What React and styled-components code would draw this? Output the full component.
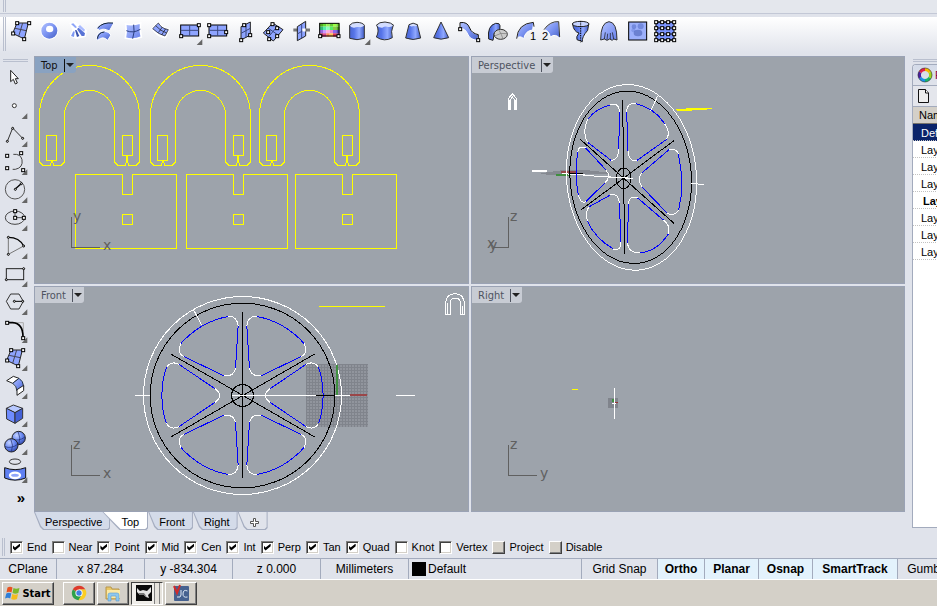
import { useState } from "react";
import styled, { createGlobalStyle, css } from "styled-components";

const GlobalStyle = createGlobalStyle`
  * {
    box-sizing: border-box;
  }
  body {
    margin: 0;
    background: #e0e3eb;
    font-family: "Liberation Sans", Arial, sans-serif;
    font-size: 11px;
    color: #000;
  }
  button {
    margin: 0;
    padding: 0;
    border: 0;
    background: none;
    color: inherit;
    font: inherit;
  }
`;

const Window = styled.div`
  display: flex;
  flex-direction: column;
  height: 100vh;
  overflow: hidden;
`;

const MenuStrip = styled.div`
  display: flex;
  flex: none;
  height: 17px;
  padding-left: 3px;
  background: linear-gradient(#e4e7ed 0 13px, #c3c8d6 13px 14px, #e0e3eb 14px);
`;

const Grip = styled.span`
  flex: none;
  width: 3px;
  height: ${({ $height }) => $height || 34}px;
  border: solid #b9bfce;
  border-width: 0 1px;
`;

const ToolBar = styled.div`
  display: flex;
  flex: none;
  height: 39px;
  padding: 0 0 5px 3px;
  overflow: hidden;
  background: linear-gradient(#ffffff, #e0e3eb 36px);
`;

const Tools = styled.div`
  display: flex;
  padding-left: 1px;
`;

const Tool = styled.button`
  flex: none;
  width: 28px;
  height: 28px;
  svg {
    display: block;
    width: 28px;
    height: 28px;
  }
`;

const Main = styled.div`
  display: flex;
  flex: 1;
  min-height: 0;
`;

const Rail = styled.div`
  display: flex;
  flex: none;
  flex-direction: column;
  width: 34px;
  padding-top: 3px;
  overflow: hidden;
`;

const RailGrip = styled.span`
  flex: none;
  width: 25px;
  height: 3px;
  margin: 0 0 1px 3px;
  border: solid #b9bfce;
  border-width: 1px 0;
`;

const More = styled.button`
  width: 42px;
  height: 28px;
  font: bold 15px "Liberation Sans", Arial, sans-serif;
`;

const Center = styled.div`
  display: flex;
  flex: 1;
  flex-direction: column;
  min-width: 0;
`;

const Viewports = styled.div`
  display: grid;
  flex: 1;
  grid-template-columns: minmax(0, 435fr) minmax(0, 434fr);
  grid-template-rows: minmax(0, 228fr) minmax(0, 226fr);
  gap: 2px;
  min-height: 0;
`;

const ViewportBox = styled.section`
  display: grid;
  grid-template: minmax(0, 1fr) / minmax(0, 1fr);
  overflow: hidden;
  background: #9da3ab;
  box-shadow: inset 1px 1px #9aa2b4, inset -1px -1px #9aa2b4;
`;

const Scene = styled.svg`
  grid-area: 1 / 1;
  width: 100%;
  height: 100%;
  fill: none;
  stroke: #fff;
  shape-rendering: crispEdges;
  path,
  line,
  rect,
  circle,
  ellipse {
    vector-effect: non-scaling-stroke;
  }
  text {
    fill: #606060;
    stroke: none;
    font: 14px "DejaVu Sans", Verdana, sans-serif;
  }
`;

const ViewportTitle = styled.button`
  display: flex;
  z-index: 1;
  grid-area: 1 / 1;
  align-items: center;
  place-self: start;
  height: 16px;
  margin: 1px 0 0 1px;
  padding: 0 2px 0 6px;
  gap: 6px;
  border-radius: 0 0 3px 0;
  background: ${({ $active }) => ($active ? "#89a2c1" : "#c8ccd4")};
  color: ${({ $active }) => ($active ? "#111" : "#4e535f")};
  font: 11px "DejaVu Sans Condensed", "DejaVu Sans", sans-serif;
  font-stretch: condensed;
`;

const Arrow = styled.span`
  display: flex;
  align-items: center;
  height: 13px;
  padding-left: 1px;
  border-left: 1px solid currentColor;
  &::after {
    content: "";
    border: 4px solid transparent;
    border-top-color: #222;
    border-bottom: 0;
  }
`;

const Tabs = styled.div`
  display: flex;
  flex: none;
  height: 24px;
  padding-bottom: 6px;
`;

const Tab = styled.button`
  display: flex;
  z-index: 0;
  position: relative;
  align-items: center;
  height: 18px;
  padding: 2px 8px 0 11px;
  background: #a5adc0;
  clip-path: polygon(0 0, 100% 0, 100% 16px, calc(100% - 2px) 100%, 9px 100%, 6px 15px);
  &::before {
    content: "";
    position: absolute;
    z-index: -1;
    inset: 0 1px 1px 1px;
    background: ${({ $plain }) => ($plain ? "#e0e3eb" : "#d4dbe9")};
    clip-path: polygon(0 0, 100% 0, 100% 15px, calc(100% - 2px) 100%, 9px 100%, 6px 14px);
  }
  ${({ $active }) =>
    $active &&
    css`
      z-index: 1;
      margin-left: -8px;
      padding-right: 9px;
      padding-left: 19px;
      clip-path: polygon(0 0, 100% 0, 100% 16px, calc(100% - 2px) 100%, 17px 100%, 14px 15px);
      &::before {
        background: #fff;
        clip-path: polygon(0 0, 100% 0, 100% 15px, calc(100% - 2px) 100%, 17px 100%, 14px 14px);
      }
    `}
  svg {
    display: block;
    width: 11px;
    height: 11px;
  }
`;

const SidePanel = styled.aside`
  display: flex;
  flex: none;
  flex-direction: column;
  width: 25px;
  margin-left: 7px;
  padding: 3px 0 8px;
  overflow: hidden;
  white-space: nowrap;
`;

const PanelGrip = styled(RailGrip)`
  margin: 0 0 2px 1px;
`;

const Panel = styled.div`
  display: flex;
  flex: 1;
  flex-direction: column;
  border: solid #a3abbd;
  border-width: 1px 0 1px 1px;
  border-radius: 4px 0 0 0;
  overflow: hidden;
  background: #fff;
`;

const PanelTab = styled.button`
  display: flex;
  flex: none;
  align-items: center;
  gap: 2px;
  height: 21px;
  padding-left: 4px;
  border-bottom: 1px solid #a3abbd;
  background: linear-gradient(#d4dbe9, #e0e3eb);
  color: #803;
  svg {
    flex: none;
    width: 16px;
    height: 16px;
  }
`;

const PanelTools = styled(PanelTab)`
  background: #e4e6ec;
`;

const LayerTable = styled.table`
  width: 100%;
  border-spacing: 0;
  th {
    height: 17px;
    padding: 0 0 0 6px;
    border-bottom: 1px solid #77736a;
    background: #d4d0c8;
    font-weight: normal;
    text-align: left;
  }
`;

const LayerCell = styled.td`
  height: 17px;
  padding: 1px 0 0 ${({ $current }) => ($current ? 10 : 8)}px;
  border-bottom: 1px dotted #c2c2c2;
  background: ${({ $selected }) => ($selected ? "#0a246a" : "#fff")};
  color: ${({ $selected }) => ($selected ? "#fff" : "#000")};
  font-weight: ${({ $current }) => ($current ? "bold" : "normal")};
`;

const SnapBar = styled.div`
  display: flex;
  flex: none;
  align-items: center;
  gap: 5px;
  height: 22px;
  padding-left: 2px;
  overflow: hidden;
  white-space: nowrap;
`;

const SnapLabel = styled.label`
  display: flex;
  align-items: center;
  gap: 4px;
`;

const CheckBox = styled.input`
  display: grid;
  place-items: center;
  width: 13px;
  height: 13px;
  margin: 0;
  appearance: none;
  border: 1px solid;
  border-color: #808080 #fff #fff #808080;
  background: #fff;
  box-shadow: inset 1px 1px #404040, inset -1px -1px #d4d0c8;
  &:checked::after {
    content: "";
    width: 7px;
    height: 7px;
    background: #000;
    clip-path: polygon(0 28%, 28% 57%, 100% 0, 100% 40%, 28% 100%, 0 70%);
  }
  ${({ $raised }) =>
    $raised &&
    css`
      border-color: #fff #404040 #404040 #fff;
      background: #d4d0c8;
      box-shadow: inset -1px -1px #808080;
    `}
`;

const StatusBar = styled.div`
  display: flex;
  flex: none;
  height: 21px;
  overflow: hidden;
  border-top: 1px solid #a3abbd;
  font-size: 12px;
`;

const StatusCell = styled.button`
  display: flex;
  flex: none;
  align-items: center;
  justify-content: ${({ $left }) => ($left ? "flex-start" : "center")};
  gap: 2px;
  width: ${({ $width }) => $width}px;
  padding: 0 3px;
  overflow: hidden;
  border-right: 1px solid #a3abbd;
  background: ${({ $on }) => ($on ? "#e3f2fc" : "transparent")};
  font-weight: ${({ $on }) => ($on ? "bold" : "normal")};
  white-space: nowrap;
`;

const Swatch = styled.span`
  width: 14px;
  height: 14px;
  background: #000;
`;

const TaskBar = styled.div`
  display: flex;
  flex: none;
  align-items: center;
  gap: 2px;
  height: 27px;
  padding: 0 2px;
  border-top: 1px solid #fff;
  background: #d4d0c8;
`;

const TaskButton = styled.button`
  display: flex;
  align-items: center;
  justify-content: center;
  width: 32px;
  height: 23px;
  border: 1px solid;
  border-color: #fff #404040 #404040 #fff;
  box-shadow: inset -1px -1px #808080;
  svg {
    display: block;
    width: 18px;
    height: 18px;
  }
  ${({ $pressed }) =>
    $pressed &&
    css`
      justify-content: flex-start;
      padding-left: 3px;
      border-color: #404040 #fff #fff #404040;
      background: linear-gradient(
        90deg,
        #f0eeea 22px,
        #808080 22px 23px,
        #e6e3dd 23px 27px,
        #808080 27px 28px,
        #e6e3dd 28px
      );
      box-shadow: none;
    `}
`;

const StartButton = styled(TaskButton)`
  width: 52px;
  margin-right: 7px;
  gap: 1px;
  font: bold 11px "DejaVu Sans Condensed", "DejaVu Sans", sans-serif;
  svg {
    width: 16px;
    height: 16px;
  }
`;

/* ---- icon parts, drawn on an 84 x 84 board ---- */

const Node = ({ x, y }) => (
  <rect x={x - 4} y={y - 4} width="9" height="9" fill="#fff" stroke="#000" strokeWidth="3" />
);

const Dot = ({ x, y, r = 4 }) => (
  <circle cx={x} cy={y} r={r} fill="#fff" stroke="#000" strokeWidth="3" />
);

const Flyout = () => <path d="M82 67V84H65Z" fill="#666" />;

const SurfaceIcon = () => (
  <>
    <path d="M33 21H67L55 69L20 52Z" fill="#8ea4ff" stroke="#222" strokeWidth="3" />
    <path d="M50 21L38 61M27 37L61 44" stroke="#445" strokeWidth="3" fill="none" />
    <Node x={33} y={21} />
    <Node x={69} y={21} />
    <Node x={21} y={52} />
    <Node x={54} y={69} />
  </>
);

const railIcons = {
  Select: (
    <path
      d="M32 22V56L40 49L46 63L52 60L46 47H55Z"
      fill="#fff"
      stroke="#222"
      strokeWidth="3"
    />
  ),
  Point: <circle cx="43" cy="44" r="6" fill="#fff" stroke="#333" strokeWidth="3" />,
  Polyline: (
    <>
      <path d="M22 67L38 27L68 58" fill="none" stroke="#333" strokeWidth="3" />
      <Dot x={22} y={67} r={3} />
      <Dot x={38} y={28} r={3} />
      <Dot x={68} y={58} r={3} />
    </>
  ),
  Curve: (
    <>
      <path d="M40 22Q62 20 66 38Q70 62 46 67H38" fill="none" stroke="#444" strokeWidth="3" />
      <Node x={21} y={26} />
      <Node x={63} y={18} />
      <Node x={21} y={63} />
      <Node x={69} y={69} />
    </>
  ),
  Circle: (
    <>
      <circle cx="45" cy="43" r="29" fill="none" stroke="#555" strokeWidth="3" />
      <path d="M45 43L65 25" stroke="#000" strokeWidth="4" />
      <Dot x={46} y={43} r={3} />
      <Dot x={64} y={26} r={3} />
    </>
  ),
  Ellipse: (
    <>
      <ellipse cx="45" cy="44" rx="29" ry="20" fill="none" stroke="#444" strokeWidth="3" />
      <path d="M45 24V44H71" fill="none" stroke="#000" strokeWidth="2" />
      <Node x={45} y={24} />
      <Node x={45} y={44} />
      <Node x={71} y={44} />
    </>
  ),
  Arc: (
    <>
      <path d="M25 19V70L71 45" fill="none" stroke="#777" strokeWidth="3" />
      <path d="M25 19Q58 19 71 45" fill="none" stroke="#000" strokeWidth="4" />
      <Dot x={25} y={19} r={3} />
      <Dot x={71} y={45} r={3} />
      <Dot x={25} y={70} r={3} />
    </>
  ),
  Rectangle: (
    <>
      <rect x="19" y="29" width="52" height="33" fill="none" stroke="#222" strokeWidth="3" />
      <Dot x={71} y={29} r={3} />
      <Dot x={19} y={62} r={3} />
    </>
  ),
  Polygon: (
    <>
      <path d="M19 43L32 21H57L70 43L57 66H32Z" fill="none" stroke="#333" strokeWidth="3" />
      <path d="M44 43H68" stroke="#000" strokeWidth="3" />
      <Dot x={43} y={43} r={3} />
      <Dot x={68} y={43} r={3} />
    </>
  ),
  Fillet: (
    <>
      <path d="M40 23H70V48" fill="none" stroke="#aaa" strokeWidth="3" />
      <path d="M21 23H38Q69 25 69 66" fill="none" stroke="#000" strokeWidth="5" />
      <Node x={21} y={23} />
      <Node x={69} y={69} />
    </>
  ),
  Surface: <SurfaceIcon />,
  BlendSurface: (
    <>
      <path d="M20 29L40 16L57 22L38 37Z" fill="#fff" stroke="#222" strokeWidth="3" />
      <path d="M38 37L57 22Q70 30 71 47L51 60Q50 44 38 37Z" fill="url(#blue)" stroke="#234" strokeWidth="3" />
      <path d="M51 56L71 43V59L51 73Z" fill="#fff" stroke="#222" strokeWidth="3" />
    </>
  ),
  Box: (
    <>
      <path d="M19 28L40 18L68 28L45 41Z" fill="#b7c8ff" stroke="#333" strokeWidth="3" />
      <path d="M19 28L45 41V73L20 60Z" fill="#6f8cff" stroke="#333" strokeWidth="3" />
      <path d="M45 41L68 28V58L45 73Z" fill="#4461d6" stroke="#333" strokeWidth="3" />
    </>
  ),
  Boolean: (
    <>
      <circle cx="56" cy="33" r="20" fill="url(#ball)" stroke="#222" strokeWidth="3" />
      <path d="M54 13Q64 33 56 53M37 37Q56 44 75 30" fill="none" stroke="#1d2a66" strokeWidth="2" />
      <circle cx="34" cy="55" r="20" fill="url(#ball)" stroke="#222" strokeWidth="3" />
      <path d="M32 35Q42 55 34 75M15 59Q34 66 53 52" fill="none" stroke="#1d2a66" strokeWidth="2" />
    </>
  ),
  Project: (
    <>
      <ellipse cx="45" cy="20" rx="17" ry="8" fill="none" stroke="#333" strokeWidth="3" />
      <path d="M14 38Q45 50 77 38V69Q45 82 14 69Z" fill="#5f80f2" stroke="#111" strokeWidth="3" />
      <ellipse cx="45" cy="61" rx="15" ry="8" fill="#8ea5fa" stroke="#fff" strokeWidth="7" />
    </>
  ),
};

const stripColors = [
  "#5a2", "#6d3", "#9e5", "#6c3", "#9f4", "#7d3",
  "#3b7", "#5ea", "#8fb", "#5e6", "#8c4", "#5a2",
  "#96d", "#c9f", "#fad", "#e8c", "#86e", "#54b",
  "#a35", "#d48", "#f85", "#fb5", "#d35", "#926",
];

const topIcons = {
  "Surface from corners": (
    <g transform="translate(-3 -3)">
      <SurfaceIcon />
    </g>
  ),
  "Planar curves": (
    <>
      <circle cx="43" cy="41" r="27" fill="#fff" />
      <circle cx="43" cy="41" r="24" fill="url(#blue)" />
      <ellipse cx="44" cy="36" rx="11" ry="10" fill="#fff" />
    </>
  ),
  "Curve network": (
    <>
      <path d="M19 18L36 14L72 40L68 60L40 66L20 58L28 38Z" fill="#fff" />
      <path d="M24 21L31 19L42 31L37 33Z" fill="#8da5f8" />
      <path d="M42 36L47 32L66 49L64 57L56 57Z" fill="#5873d6" />
      <path d="M45 29L51 24L66 38L63 44Z" fill="#a9baff" />
      <path d="M36 39L41 40L49 57L42 60Z" fill="#3b53ad" />
      <path d="M31 43L35 44L33 60L24 57Z" fill="#7e98f2" />
    </>
  ),
  Loft: (
    <>
      <path d="M16 34Q33 10 69 17L55 42Q37 32 26 40Z" fill="url(#blue)" stroke="#fff" strokeWidth="3" />
      <path d="M16 66Q17 42 40 42Q53 44 60 54L50 70Q36 55 20 70Z" fill="url(#blue)" stroke="#fff" strokeWidth="3" />
      <path d="M20 33Q35 15 66 18M19 65Q22 46 40 45" fill="none" stroke="#123" strokeWidth="3" />
    </>
  ),
  "Surface from edges": (
    <>
      <path d="M20 21Q40 26 65 18Q62 42 67 60Q43 70 19 63Q24 42 20 21Z" fill="url(#soft)" stroke="#fff" strokeWidth="5" />
      <path d="M44 23Q48 45 41 65M22 41Q42 50 64 37" fill="none" stroke="#2b3e80" strokeWidth="3" />
    </>
  ),
  Patch: (
    <>
      <path d="M17 35L34 18Q44 35 64 38L54 60Q34 58 17 35Z" fill="#8ea4ff" stroke="#fff" strokeWidth="8" />
      <path d="M17 35L34 18Q44 35 64 38L54 57Q34 52 17 35Z" fill="#8ea4ff" stroke="#111" strokeWidth="2" />
      <path d="M26 26Q40 42 59 48M34 47L46 30M44 54L56 35" fill="none" stroke="#111" strokeWidth="2" />
    </>
  ),
  "Rectangular plane": (
    <>
      <rect x="17" y="24" width="54" height="33" fill="#8ea4ff" stroke="#000" strokeWidth="3" />
      <path d="M44 24V57M17 40H71" stroke="#3a4880" strokeWidth="3" />
      <Node x={71} y={24} />
      <Node x={18} y={57} />
      <Flyout />
    </>
  ),
  "Plane 3 points": (
    <>
      <rect x="18" y="24" width="53" height="33" fill="#8ea4ff" stroke="#000" strokeWidth="3" />
      <path d="M44 24V57M18 40H71" stroke="#3a4880" strokeWidth="3" />
      <Node x={18} y={24} />
      <Node x={18} y={57} />
      <Node x={69} y={45} />
    </>
  ),
  "Vertical plane": (
    <>
      <path d="M30 29L58 15V54L30 69Z" fill="#8ea4ff" stroke="#222" strokeWidth="3" />
      <path d="M45 21V62M30 49L58 34" stroke="#3a4880" strokeWidth="3" />
      <Node x={39} y={24} />
      <Node x={57} y={54} />
      <Node x={30} y={69} />
    </>
  ),
  "Plane through points": (
    <>
      <path d="M13 48L41 18L72 38L43 72Z" fill="#8ea4ff" stroke="#222" strokeWidth="3" />
      <path d="M27 33L57 54M56 27L28 60" stroke="#3a4880" strokeWidth="3" />
      <Node x={40} y={21} />
      <Node x={27} y={45} />
      <Node x={54} y={33} />
      <Node x={30} y={66} />
      <Node x={54} y={57} />
    </>
  ),
  "Cutting plane": (
    <>
      <path d="M19 39H69" stroke="#777" strokeWidth="9" />
      <path d="M31 29L56 13V57L31 71Z" fill="#8ea4ff" stroke="#222" strokeWidth="3" />
      <path d="M44 21V64M31 51L56 36" stroke="#3a4880" strokeWidth="3" />
      <path d="M46 39H56" stroke="#fff" strokeWidth="9" />
    </>
  ),
  Picture: (
    <>
      {stripColors.map((color, i) => (
        <rect key={i} x={14 + (i % 6) * 10} y={19 + Math.floor(i / 6) * 10} width="10" height="10" fill={color} />
      ))}
      <rect x="14" y="19" width="58" height="38" fill="none" stroke="#000" strokeWidth="3" />
      <Node x={15} y={57} />
      <Node x={70} y={57} />
    </>
  ),
  Extrude: (
    <>
      <path d="M20 25V64Q42 72 64 64V25Z" fill="url(#metal)" stroke="#333" strokeWidth="3" />
      <path d="M20 25Q26 16 42 16Q60 17 64 25Q60 32 48 30Q40 29 34 32Q24 33 20 25Z" fill="#d3ddff" />
      <path d="M20 25Q26 16 42 16Q60 17 64 25" fill="none" stroke="#333" strokeWidth="3" />
      <Flyout />
    </>
  ),
  "Extrude along curve": (
    <>
      <path d="M17 24Q26 42 16 60Q40 76 64 62Q58 44 67 24Z" fill="url(#metal)" stroke="#333" strokeWidth="3" />
      <path d="M17 24Q24 15 42 15Q62 17 67 24Q62 32 48 29Q40 28 34 32Q22 33 17 24Z" fill="#d3ddff" />
      <path d="M17 24Q24 15 42 15Q62 17 67 24" fill="none" stroke="#333" strokeWidth="3" />
    </>
  ),
  "Extrude tapered": (
    <>
      <path d="M30 23L20 63Q42 72 65 63L55 23Z" fill="url(#metal)" stroke="#333" strokeWidth="3" />
      <path d="M30 23Q42 14 55 23Q52 29 44 27Q34 31 30 23Z" fill="#d3ddff" />
      <path d="M30 23Q42 14 55 23" fill="none" stroke="#333" strokeWidth="3" />
    </>
  ),
  "Extrude to point": (
    <path d="M42 15L20 62Q42 71 65 62Z" fill="url(#metal)" stroke="#333" strokeWidth="3" />
  ),
  Ribbon: (
    <>
      <path d="M15 16Q38 12 45 34Q51 50 71 53L68 70Q44 68 38 51Q31 34 15 34Z" fill="url(#blue)" stroke="#fff" strokeWidth="3" />
      <path d="M15 36V17Q37 13 44 33Q50 49 70 53V67" fill="none" stroke="#111" strokeWidth="3" />
      <Node x={15} y={36} />
      <Node x={69} y={69} />
    </>
  ),
  "Sweep blend": (
    <>
      <path d="M17 66Q12 26 38 19Q50 17 51 26L50 46L34 48L30 70Z" fill="url(#metal)" stroke="#222" strokeWidth="3" />
      <ellipse cx="53" cy="52" rx="20" ry="15" fill="#ccc" stroke="#333" strokeWidth="3" />
      <path d="M35 57Q54 45 71 50M47 38Q56 52 60 66" fill="none" stroke="#777" strokeWidth="2" />
    </>
  ),
  "Sweep 1 rail": (
    <>
      <path d="M17 65Q20 20 68 15L65 39Q44 40 38 65Q26 54 17 65Z" fill="url(#blue)" stroke="#fff" strokeWidth="3" />
      <path d="M17 65Q20 20 67 16L69 29" fill="none" stroke="#222" strokeWidth="3" />
      <text x="57" y="70" fontSize="33">1</text>
    </>
  ),
  "Sweep 2 rails": (
    <>
      <path d="M15 38Q33 12 59 14L63 65Q50 48 34 60Q30 40 15 38Z" fill="url(#blue)" stroke="#fff" strokeWidth="3" />
      <path d="M15 38Q33 12 59 14L62 60" fill="none" stroke="#333" strokeWidth="3" />
      <text x="9" y="70" fontSize="33">2</text>
    </>
  ),
  Revolve: (
    <>
      <path d="M17 22Q20 44 36 48Q26 60 30 68L46 74Q44 60 62 40L65 22Z" fill="url(#metal)" stroke="#222" strokeWidth="3" />
      <ellipse cx="41" cy="21" rx="25" ry="8" fill="#c6d3ff" stroke="#222" strokeWidth="3" />
      <path d="M41 12V76" stroke="#000" strokeWidth="3" strokeDasharray="4 3" />
    </>
  ),
  Drape: (
    <>
      <path d="M17 69Q17 16 42 14Q66 15 66 69L56 66L52 70L44 66L36 70L28 66Z" fill="url(#soft)" stroke="#333" strokeWidth="3" />
      <path d="M28 66L31 46M36 68L38 50M46 66V48M56 66L52 46" stroke="#111" strokeWidth="2" />
    </>
  ),
  Heightfield: (
    <>
      <rect x="17" y="15" width="54" height="54" fill="#9cb0fb" stroke="#000" strokeWidth="3" />
      <circle cx="33" cy="29" r="7" fill="#4a64c2" opacity=".5" />
      <circle cx="53" cy="28" r="9" fill="#4a64c2" opacity=".5" />
      <ellipse cx="45" cy="48" rx="13" ry="10" fill="#3a51a8" opacity=".5" />
      <circle cx="31" cy="40" r="6" fill="#4a64c2" opacity=".3" />
    </>
  ),
  "Point grid": (
    <>
      <rect x="15" y="15" width="54" height="54" fill="#7c95ff" stroke="#000" strokeWidth="3" />
      {[15, 33, 51, 69].map((y) => (
        <g key={y}>
          <path d={`M15 ${y}H69`} stroke="#000" strokeWidth="3" />
          {[15, 33, 51, 69].map((x) => (
            <Node key={x} x={x} y={y} />
          ))}
        </g>
      ))}
    </>
  ),
};

const Gradients = () => (
  <svg width="0" height="0" style={{ position: "absolute" }} aria-hidden="true">
    <defs>
      <linearGradient id="blue" x1="0" y1="0" x2="1" y2="1">
        <stop offset="0" stopColor="#b4c4ff" />
        <stop offset=".5" stopColor="#7b93f2" />
        <stop offset="1" stopColor="#4560c4" />
      </linearGradient>
      <linearGradient id="soft" x1="0" y1="0" x2="1" y2="1">
        <stop offset="0" stopColor="#b4c4ff" />
        <stop offset="1" stopColor="#6780ec" />
      </linearGradient>
      <linearGradient id="metal">
        <stop offset="0" stopColor="#4a66d0" />
        <stop offset=".3" stopColor="#5674e8" />
        <stop offset=".65" stopColor="#8fa8ff" />
        <stop offset="1" stopColor="#3f5ac4" />
      </linearGradient>
      <radialGradient id="ball" cx=".35" cy=".3" r=".8">
        <stop offset="0" stopColor="#c4d2ff" />
        <stop offset=".5" stopColor="#6a89f2" />
        <stop offset="1" stopColor="#2a40a0" />
      </radialGradient>
      <pattern id="mesh" width="3" height="3" patternUnits="userSpaceOnUse" x="306" y="364">
        <rect width="3" height="3" fill="#91959d" />
        <path d="M0 .5H3M.5 0V3" stroke="#80848c" />
      </pattern>
    </defs>
  </svg>
);

/* ---- scenes ---- */

const Magnet = ({ dx }) => (
  <g transform={`translate(${dx} 0)`}>
    <path d="M39.5 115.5A50 50 0 0 1 139.5 115.5V162L136 165.5H129L127.5 162V155.5M126.5 155.5V162L125 165.5H118L114.5 162V115.5A25 25 0 0 0 64.5 115.5V162L61 165.5H54L52.5 162V160.5M51.5 160.5V162L50 165.5H43L39.5 162" />
    <path d="M39.5 162V115" />
    <rect x="46.5" y="135.5" width="10" height="25" />
    <rect x="122.5" y="135.5" width="10" height="20" />
    <path d="M75.5 174.5H122.5V194.5H132.5V174.5H176.5V248.5H75.5Z" />
    <rect x="122.5" y="214.5" width="10" height="10" />
  </g>
);

const Axes = ({ x, y, up, side }) => (
  <g>
    <path d={`M${x + 0.5} ${y - 30}V${y + 0.5}H${x + 29}`} stroke="#606060" />
    <text x={x + 2} y={y - 26}>{up}</text>
    <text x={x + 32} y={y + 3}>{side}</text>
  </g>
);

const TopScene = () => (
  <Scene viewBox="34 56 435 228">
    <g stroke="#ff0">
      <Magnet dx={0} />
      <Magnet dx={111} />
      <Magnet dx={220} />
    </g>
    <Axes x={71} y={247} up="y" side="x" />
  </Scene>
);

const PerspectiveScene = () => (
  <Scene viewBox="471 56 434 228">
    <g transform="translate(470 50) scale(.33333)">
      <path d="M210 370L280 360H347L427 369L410 373L230 374Z" fill="#858991" stroke="none" />
      <path d="M272 366H318" stroke="#94474a" strokeWidth="2" />
      <path d="M258 375H302" stroke="#3f8f3f" strokeWidth="2" />
      <path d="M186 363H231" strokeWidth="2" />
      <path d="M276 371L345 375" />
      <ellipse cx="484.5" cy="382" rx="195" ry="279" transform="rotate(-4.5 484.5 382)" />
      <ellipse cx="482" cy="382" rx="182" ry="259" transform="rotate(-4.5 482 382)" stroke="#000" />
      <path d="M338 376L490 385M664 401L701 403M563 138L541 184" />
      <path d="M300 372H338" stroke="#000" />
      <g stroke="#00f">
        <path d="M353 208Q380 174 420 165M449 187L446 296M423 331L353 277" />
        <path d="M497 161Q555 175 584 222M590 268L500 332M474 303L470 185" />
        <path d="M347 294L408 360M404 400L347 455M325 435Q313 370 323 306" />
        <path d="M625 312Q645 400 626 480M592 490L515 410M514 370L597 299" />
        <path d="M358 470L421 435M448 458L453 575M430 597Q375 565 352 513" />
        <path d="M503 444L580 510M595 552Q560 605 510 608M473 578L475 462" />
      </g>
      <path d="M420 165Q447 155 449 187M446 296Q445 332 423 331M353 277Q335 248 353 208" />
      <path d="M470 185Q470 158 497 161M584 222Q602 245 590 268M500 332Q476 335 474 303" />
      <path d="M323 306Q325 285 347 294M408 360Q425 380 404 400M347 455Q332 462 325 435" />
      <path d="M597 299Q617 292 625 312M626 480Q615 500 592 490M515 410Q502 385 514 370" />
      <path d="M421 435Q445 428 448 458M453 575Q452 605 430 597M352 513Q344 485 358 470" />
      <path d="M475 462Q478 435 503 444M580 510Q602 525 595 552M510 608Q474 610 473 578" />
      <g stroke="#000">
        <ellipse cx="461" cy="385" rx="22" ry="31" />
        <path d="M458 150L464 611M331 268L613 521M613 271L334 479" />
      </g>
      <path d="M415 382L490 385" />
      <path d="M615 177H640L660 173H725V178L668 180L665 184H625Z" fill="#ff0" stroke="none" />
      <path d="M116 179V145L127 131L139 145V179M122 179V148L127 141L133 148V179" />
      <path d="M119 150V179M136 150V179" />
    </g>
    <path d="M508.5 217V247.5H494" stroke="#606060" />
    <text x="510" y="221">z</text>
    <text x="487" y="248">x</text>
    <text x="489" y="250">y</text>
  </Scene>
);

// quarter of the wheel, mirrored into the other three
const Quarter = ({ transform }) => (
  <g transform={transform}>
    <path stroke="#00f" d="M-185 -156Q-125 -222 -43 -237M-13 -209L-21 -81M-56 -59L-176 -117" />
    <path d="M-43 -237Q-16 -239 -13 -209M-21 -81Q-26 -56 -56 -59M-176 -117Q-198 -126 -185 -156" />
    <path stroke="#00f" d="M-242 0Q-241 -50 -228 -84M-190 -93L-82 -20" />
    <path d="M-228 -84Q-214 -106 -190 -93M-82 -20Q-68 -10 -68 0" />
  </g>
);

const FrontScene = () => (
  <Scene viewBox="34 286 435 226">
    <rect x="306" y="364" width="62" height="63" fill="url(#mesh)" stroke="none" />
    <g transform="translate(242.5 395.5) scale(.33333)">
      <circle r="297" />
      <circle r="277" stroke="#000" />
      <Quarter />
      <Quarter transform="scale(-1 1)" />
      <Quarter transform="scale(1 -1)" />
      <Quarter transform="scale(-1 -1)" />
      <g stroke="#000">
        <circle r="33" />
        <path d="M0 -250V247M-214 -124L216 124M216 -124L-214 124M220 0H279" />
      </g>
      <path d="M-322 0H-277M-33 0H220M279 0H322M-147 -257L-122 -211" />
    </g>
    <path d="M337 365V395" stroke="#3f9040" strokeWidth="2" />
    <path d="M350 395H367" stroke="#9a4648" strokeWidth="2" />
    <path d="M319 306.5H385" stroke="#ff0" />
    <path d="M396 395.5H415" />
    <path d="M445.5 314V304Q446 294 455 293.500Q464 294 464.5 304V314H460.5V303Q460 298 455 298Q450 298 450.5 303V314Z" />
    <path d="M447.5 303V314M462.5 306V314" />
    <Axes x={71} y={475} up="z" side="x" />
  </Scene>
);

const RightScene = () => (
  <Scene viewBox="471 286 434 226">
    <rect x="608" y="398" width="10" height="10" fill="#80848c" stroke="none" />
    <path d="M613 399V402" stroke="#3f9040" strokeWidth="2" />
    <path d="M614 402.5H618" stroke="#9a3638" />
    <path d="M612 403.5H616" />
    <path d="M614.5 388V419" />
    <path d="M572 389.5H578" stroke="#ff0" />
    <Axes x={508} y={475} up="z" side="y" />
  </Scene>
);

const views = [
  { name: "Top", scene: TopScene },
  { name: "Perspective", scene: PerspectiveScene },
  { name: "Front", scene: FrontScene },
  { name: "Right", scene: RightScene },
];

const tabs = ["Perspective", "Top", "Front", "Right"];

const layers = ["Default", "Layer 01", "Layer 02", "Layer 03", "Layer 04", "Layer 05", "Layer 06", "Layer 07"];

const snaps = [
  ["End", true],
  ["Near", false],
  ["Point", true],
  ["Mid", true],
  ["Cen", true],
  ["Int", true],
  ["Perp", true],
  ["Tan", true],
  ["Quad", true],
  ["Knot", false],
  ["Vertex", false],
];

const status = [
  { label: "CPlane", width: 57 },
  { label: "x 87.284", width: 88 },
  { label: "y -834.304", width: 88 },
  { label: "z 0.000", width: 88 },
  { label: "Millimeters", width: 88 },
  { label: "Default", width: 173, layer: true },
  { label: "Grid Snap", width: 76 },
  { label: "Ortho", width: 47, on: true },
  { label: "Planar", width: 54, on: true },
  { label: "Osnap", width: 54, on: true },
  { label: "SmartTrack", width: 85, on: true },
  { label: "Gumball", width: 64 },
];

function Viewport({ name, scene: Drawing, active, onSelect }) {
  return (
    <ViewportBox aria-label={name}>
      <Drawing />
      <ViewportTitle $active={active} onClick={() => onSelect(name)}>
        {name}
        <Arrow />
      </ViewportTitle>
    </ViewportBox>
  );
}

function App() {
  const [activeView, setActiveView] = useState("Top");

  return (
    <>
      <GlobalStyle />
      <Gradients />
      <Window>
        <MenuStrip>
          <Grip $height={12} />
        </MenuStrip>
        <ToolBar>
          <Grip />
          <Tools>
            {Object.entries(topIcons).map(([name, icon]) => (
              <Tool key={name} aria-label={name}>
                <svg viewBox="0 0 84 84">{icon}</svg>
              </Tool>
            ))}
          </Tools>
        </ToolBar>
        <Main>
          <Rail>
            <RailGrip />
            {Object.entries(railIcons).map(([name, icon]) => (
              <Tool key={name} aria-label={name}>
                <svg viewBox="0 0 84 84">
                  {name !== "Select" && <Flyout />}
                  {icon}
                </svg>
              </Tool>
            ))}
            <More aria-label="More tools">»</More>
          </Rail>
          <Center>
            <Viewports>
              {views.map((view) => (
                <Viewport
                  key={view.name}
                  {...view}
                  active={view.name === activeView}
                  onSelect={setActiveView}
                />
              ))}
            </Viewports>
            <Tabs>
              {tabs.map((name) => (
                <Tab key={name} $active={name === activeView} onClick={() => setActiveView(name)}>
                  {name}
                </Tab>
              ))}
              <Tab $plain aria-label="New viewport">
                <svg viewBox="0 0 11 11" fill="#fff" stroke="#555">
                  <path d="M4.500 1.500H6.500V4.500H9.500V6.500H6.500V9.500H4.500V6.500H1.500V4.500H4.500Z" />
                </svg>
              </Tab>
            </Tabs>
          </Center>
          <SidePanel>
            <PanelGrip />
            <Panel>
              <PanelTab>
                <svg viewBox="0 0 16 16" fill="none" strokeWidth="3">
                  <path d="M8 2.500A5.500 5.500 0 0 1 12.800 5.200" stroke="#f5b800" />
                  <path d="M12.800 5.200A5.500 5.500 0 0 1 12.800 10.800" stroke="#9fd41c" />
                  <path d="M12.800 10.800A5.500 5.500 0 0 1 8 13.500" stroke="#18b46a" />
                  <path d="M8 13.500A5.500 5.500 0 0 1 3.200 10.800" stroke="#1892e8" />
                  <path d="M3.200 10.800A5.500 5.500 0 0 1 3.200 5.200" stroke="#4a1fa0" />
                  <path d="M3.200 5.200A5.500 5.500 0 0 1 8 2.500" stroke="#e0204a" />
                  <circle cx="8" cy="8" r="7" stroke="#333" strokeWidth="1" opacity=".6" />
                </svg>
                Properties
              </PanelTab>
              <PanelTools aria-label="New layer">
                <svg viewBox="0 0 16 16">
                  <path d="M1.500 1.500H8.500L11.500 5V14.500H1.500Z" fill="#eee" stroke="#111" />
                  <path d="M8.500 1.500V5H11.500" fill="#fff" stroke="#111" />
                </svg>
              </PanelTools>
              <LayerTable>
                <thead>
                  <tr>
                    <th>Name</th>
                  </tr>
                </thead>
                <tbody>
                  {layers.map((layer, i) => (
                    <tr key={layer}>
                      <LayerCell $selected={i === 0} $current={i === 4}>
                        {layer}
                      </LayerCell>
                    </tr>
                  ))}
                </tbody>
              </LayerTable>
            </Panel>
          </SidePanel>
        </Main>
        <SnapBar>
          <Grip $height={18} />
          {snaps.map(([name, checked]) => (
            <SnapLabel key={name}>
              <CheckBox type="checkbox" defaultChecked={checked} />
              {name}
            </SnapLabel>
          ))}
          {["Project", "Disable"].map((name) => (
            <SnapLabel key={name}>
              <CheckBox type="checkbox" $raised />
              {name}
            </SnapLabel>
          ))}
        </SnapBar>
        <StatusBar>
          {status.map((cell) => (
            <StatusCell key={cell.label} $width={cell.width} $on={cell.on} $left={cell.layer}>
              {cell.layer && <Swatch />}
              {cell.label}
            </StatusCell>
          ))}
        </StatusBar>
        <TaskBar>
          <StartButton>
            <svg viewBox="0 0 16 16">
              <path d="M2.500 2.500Q5 1 7.500 2.500L6.500 7.500Q4 6 1.500 7.500Z" fill="#e8521f" />
              <path d="M8.500 3Q11 4.500 14.500 3L13.300 8Q10.500 9.500 7.500 8Z" fill="#7ab829" />
              <path d="M1.300 8.500Q4 7 6.300 8.500L5.200 13.500Q3 12 0 13.500Z" fill="#2f7fd8" />
              <path d="M7.300 9Q10 10.500 13 9L12 14Q9 15.500 6.200 14Z" fill="#f5bc1c" />
            </svg>
            Start
          </StartButton>
          <TaskButton aria-label="Chrome">
            <svg viewBox="0 0 18 18">
              <path d="M9 9L2.800 5.400A7.200 7.200 0 0 1 15.400 5.600L9 5.600Z" fill="#de3b2c" />
              <path d="M9 9L2.800 5.400A7.200 7.200 0 0 0 8.500 16.200L12 11Z" fill="#2da14a" />
              <path d="M9 5.600H15.400A7.200 7.200 0 0 1 8.500 16.200L12 10.500Z" fill="#fbcd22" />
              <circle cx="9" cy="9" r="3.600" fill="#fff" />
              <circle cx="9" cy="9" r="2.700" fill="#3f7fe0" />
            </svg>
          </TaskButton>
          <TaskButton aria-label="Explorer">
            <svg viewBox="0 0 18 18">
              <path d="M2 3H7L8 5H15V15H2Z" fill="#e8c766" stroke="#b7964a" />
              <path d="M3 6H16V14H3Z" fill="#fbe9a5" />
              <path d="M4 17V11Q4 9 6 9H13Q15 9 15 11V17H12V12H7V17Z" fill="#8ec8ee" stroke="#5a9ccc" strokeWidth=".6" />
            </svg>
          </TaskButton>
          <TaskButton $pressed aria-label="Rhinoceros">
            <svg viewBox="0 0 18 18">
              <rect x="1" y="1" width="16" height="16" fill="#0a0a0a" />
              <path d="M2 4L5 7L8 6L12 7L16 3L16 8L13 11L14 14L11 13L9 11L5 11L2 8Z" fill="#e4e4e4" />
              <path d="M3 9L9 9L12 13L9 11L5 11Z" fill="#777" />
            </svg>
          </TaskButton>
          <TaskButton aria-label="VCarve">
            <svg viewBox="0 0 18 18">
              <rect x="2" y="2" width="15" height="15" rx="1" fill="#46618f" />
              <path d="M2 2L5 9L8 1" fill="none" stroke="#d22a2a" strokeWidth="2" />
              <path d="M9 6V11Q9 14 5 13" fill="none" stroke="#dfe9f6" strokeWidth="1" />
              <path d="M15.500 7Q11 5 11 10Q11 14 15.500 13" fill="none" stroke="#dfe9f6" strokeWidth="1" />
            </svg>
          </TaskButton>
        </TaskBar>
      </Window>
    </>
  );
}

export default App;
